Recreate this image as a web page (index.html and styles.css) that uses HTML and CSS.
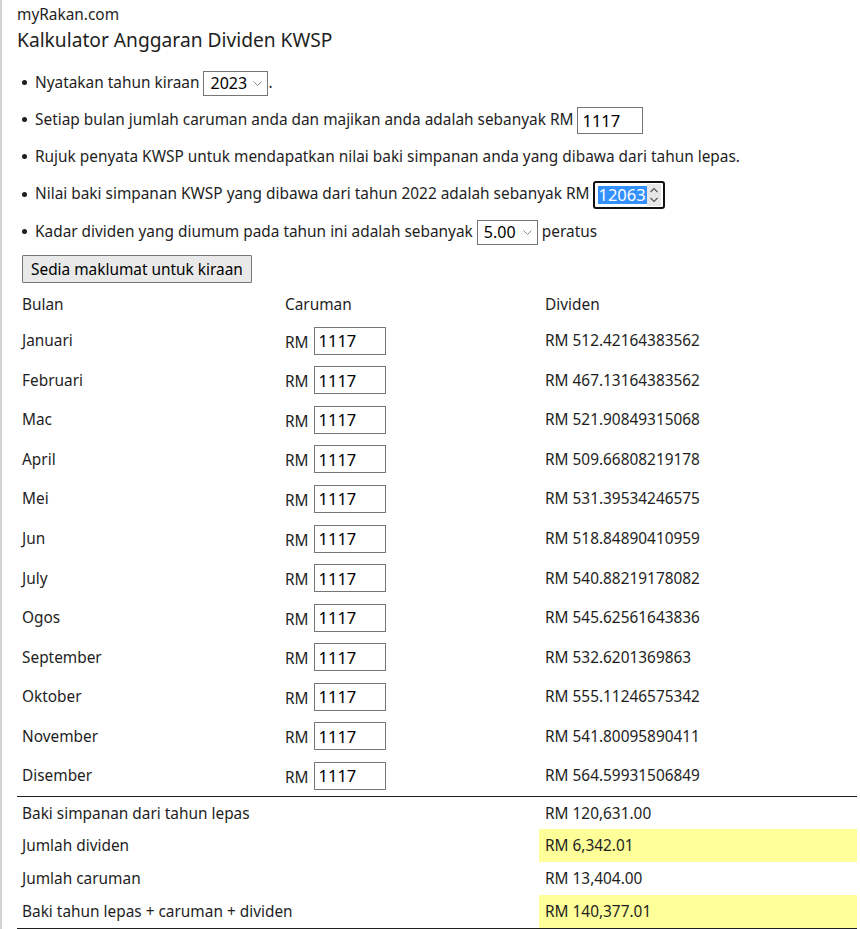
FILE: index.html
```html
<!DOCTYPE html>
<html lang="ms">
<head>
  <meta charset="UTF-8" />
  <meta name="viewport" content="width=device-width, initial-scale=1.0" />
  <title>Kalkulator Anggaran Dividen KWSP</title>
  <link rel="stylesheet" href="styles.css">
</head>
<body>
  <div class="page">
    <div class="site">myRakan.com</div>
    <h1>Kalkulator Anggaran Dividen KWSP</h1>

    <ul class="steps">
      <li>Nyatakan tahun kiraan <span class="select-wrap year"><select><option>2023</option></select><svg class="chev" width="9" height="5" viewBox="0 0 9 5"><path d="M0.5 0.5 L4.5 4.5 L8.5 0.5" fill="none" stroke="#8a8a8a" stroke-width="1"/></svg></span>.</li>
      <li>Setiap bulan jumlah caruman anda dan majikan anda adalah sebanyak RM <input type="text" class="amount" value="1117" /></li>
      <li>Rujuk penyata KWSP untuk mendapatkan nilai baki simpanan anda yang dibawa dari tahun lepas.</li>
      <li>Nilai baki simpanan KWSP yang dibawa dari tahun 2022 adalah sebanyak RM <span class="num-focus"><span class="sel">12063<span class="cut">1</span></span><span class="spin"><svg width="10" height="18" viewBox="0 0 10 18"><path d="M1.5 6 L5 2.5 L8.5 6" fill="none" stroke="#555" stroke-width="1.1"/><path d="M1.5 12 L5 15.5 L8.5 12" fill="none" stroke="#555" stroke-width="1.1"/></svg></span></span></li>
      <li>Kadar dividen yang diumum pada tahun ini adalah sebanyak <span class="select-wrap rate"><select><option>5.00</option></select><svg class="chev" width="9" height="5" viewBox="0 0 9 5"><path d="M0.5 0.5 L4.5 4.5 L8.5 0.5" fill="none" stroke="#8a8a8a" stroke-width="1"/></svg></span> peratus</li>
    </ul>

    <button type="button" class="prep-btn">Sedia maklumat untuk kiraan</button>

    <table class="calc">
      <colgroup>
        <col class="c-month" />
        <col class="c-contrib" />
        <col class="c-div" />
      </colgroup>
      <thead>
        <tr><td>Bulan</td><td>Caruman</td><td>Dividen</td></tr>
      </thead>
      <tbody class="months">
        <tr><td>Januari</td><td>RM <input type="text" class="month-in" value="1117" /></td><td>RM 512.42164383562</td></tr>
        <tr><td>Februari</td><td>RM <input type="text" class="month-in" value="1117" /></td><td>RM 467.13164383562</td></tr>
        <tr><td>Mac</td><td>RM <input type="text" class="month-in" value="1117" /></td><td>RM 521.90849315068</td></tr>
        <tr><td>April</td><td>RM <input type="text" class="month-in" value="1117" /></td><td>RM 509.66808219178</td></tr>
        <tr><td>Mei</td><td>RM <input type="text" class="month-in" value="1117" /></td><td>RM 531.39534246575</td></tr>
        <tr><td>Jun</td><td>RM <input type="text" class="month-in" value="1117" /></td><td>RM 518.84890410959</td></tr>
        <tr><td>July</td><td>RM <input type="text" class="month-in" value="1117" /></td><td>RM 540.88219178082</td></tr>
        <tr><td>Ogos</td><td>RM <input type="text" class="month-in" value="1117" /></td><td>RM 545.62561643836</td></tr>
        <tr><td>September</td><td>RM <input type="text" class="month-in" value="1117" /></td><td>RM 532.6201369863</td></tr>
        <tr><td>Oktober</td><td>RM <input type="text" class="month-in" value="1117" /></td><td>RM 555.11246575342</td></tr>
        <tr><td>November</td><td>RM <input type="text" class="month-in" value="1117" /></td><td>RM 541.80095890411</td></tr>
        <tr><td>Disember</td><td>RM <input type="text" class="month-in" value="1117" /></td><td>RM 564.59931506849</td></tr>
      </tbody>
      <tbody class="summary">
        <tr><td colspan="2">Baki simpanan dari tahun lepas</td><td>RM 120,631.00</td></tr>
        <tr><td colspan="2">Jumlah dividen</td><td class="hl">RM 6,342.01</td></tr>
        <tr><td colspan="2">Jumlah caruman</td><td>RM 13,404.00</td></tr>
        <tr><td colspan="2">Baki tahun lepas + caruman + dividen</td><td class="hl">RM 140,377.01</td></tr>
      </tbody>
    </table>
  </div>
</body>
</html>
```

FILE: styles.css
```css
body {
  margin: 0;
  font-family: "Noto Sans", "Open Sans", sans-serif;
  font-size: 15.4px;
  color: #1e1e1e;
  background: white;
}

.page {
  border-left: 2px solid #d2d2d2;
  padding: 4px 3px 0 15px;
  min-height: 925px;
}

.site {
  line-height: 21px;
}

h1 {
  font-size: 19.2px;
  font-weight: normal;
  line-height: 26px;
  margin: 1.5px 0 0;
}

.steps {
  list-style: none;
  margin: 11px 0 0;
  padding-left: 5px;
}

.steps li {
  height: 37.25px;
  line-height: 37.25px;
  white-space: nowrap;
}

.steps li::before {
  content: "";
  display: inline-block;
  width: 5px;
  height: 5px;
  border-radius: 50%;
  background: #1e1e1e;
  vertical-align: middle;
  margin-right: 8px;
  position: relative;
  top: -1px;
}

input, select, button {
  font-family: inherit;
  font-size: 15.4px;
  color: #000;
}

.select-wrap {
  position: relative;
  display: inline-block;
  vertical-align: middle;
  line-height: normal;
}

.select-wrap select {
  appearance: none;
  -webkit-appearance: none;
  background: white;
  border: 1px solid #767676;
  border-radius: 0;
  height: 25.5px;
  padding: 0 0 0 6px;
  font-size: 16px;
  display: block;
}

.select-wrap.year select { width: 65px; }
.select-wrap.rate select { width: 61px; }

.chev {
  position: absolute;
  right: 6px;
  top: 10.5px;
}

.amount {
  width: 66px;
  height: 27px;
  box-sizing: border-box;
  border: 1px solid #767676;
  padding: 0 4px;
  font-size: 16.5px;
  vertical-align: middle;
}

.num-focus {
  display: inline-flex;
  align-items: center;
  box-sizing: border-box;
  width: 72px;
  height: 28.5px;
  border: 2px solid #101010;
  border-radius: 3px;
  padding: 0 3px;
  vertical-align: middle;
  line-height: normal;
  overflow: hidden;
}

.sel {
  background: #3390ff;
  color: white;
  font-size: 16.5px;
  height: 18px;
  line-height: 18px;
  width: 49px;
  overflow: hidden;
  white-space: nowrap;
  flex: none;
}

.spin {
  flex: none;
  width: 14px;
  height: 22px;
  background: #e6e6e6;
  display: flex;
  align-items: center;
  justify-content: center;
}

.prep-btn {
  display: block;
  margin: 5.7px 0 0 5px;
  height: 27.5px;
  padding: 0 8px;
  background: #e9e9e9;
  border: 1px solid #767676;
  border-radius: 1px;
}

.calc {
  width: 840px;
  border-collapse: collapse;
  margin-top: 5px;
  table-layout: fixed;
}

.c-month { width: 262px; }
.c-contrib { width: 260px; }
.c-div { width: 318px; }

.calc td {
  padding: 0 0 0 5px;
  vertical-align: middle;
  white-space: nowrap;
}

.calc thead td {
  height: 33px;
}

.months td {
  height: 39.57px;
}

.months td + td,
.calc thead td + td,
.summary td + td {
  padding-left: 6px;
}

.month-in {
  width: 72px;
  height: 28px;
  box-sizing: border-box;
  border: 1px solid #767676;
  padding: 0 4px;
  font-size: 16.5px;
  margin-left: 1px;
}

.summary {
  border-top: 1px solid #1e1e1e;
  border-bottom: 1px solid #1e1e1e;
}

.summary td {
  height: 32.75px;
}

.hl {
  background: #ffff99;
}
```
